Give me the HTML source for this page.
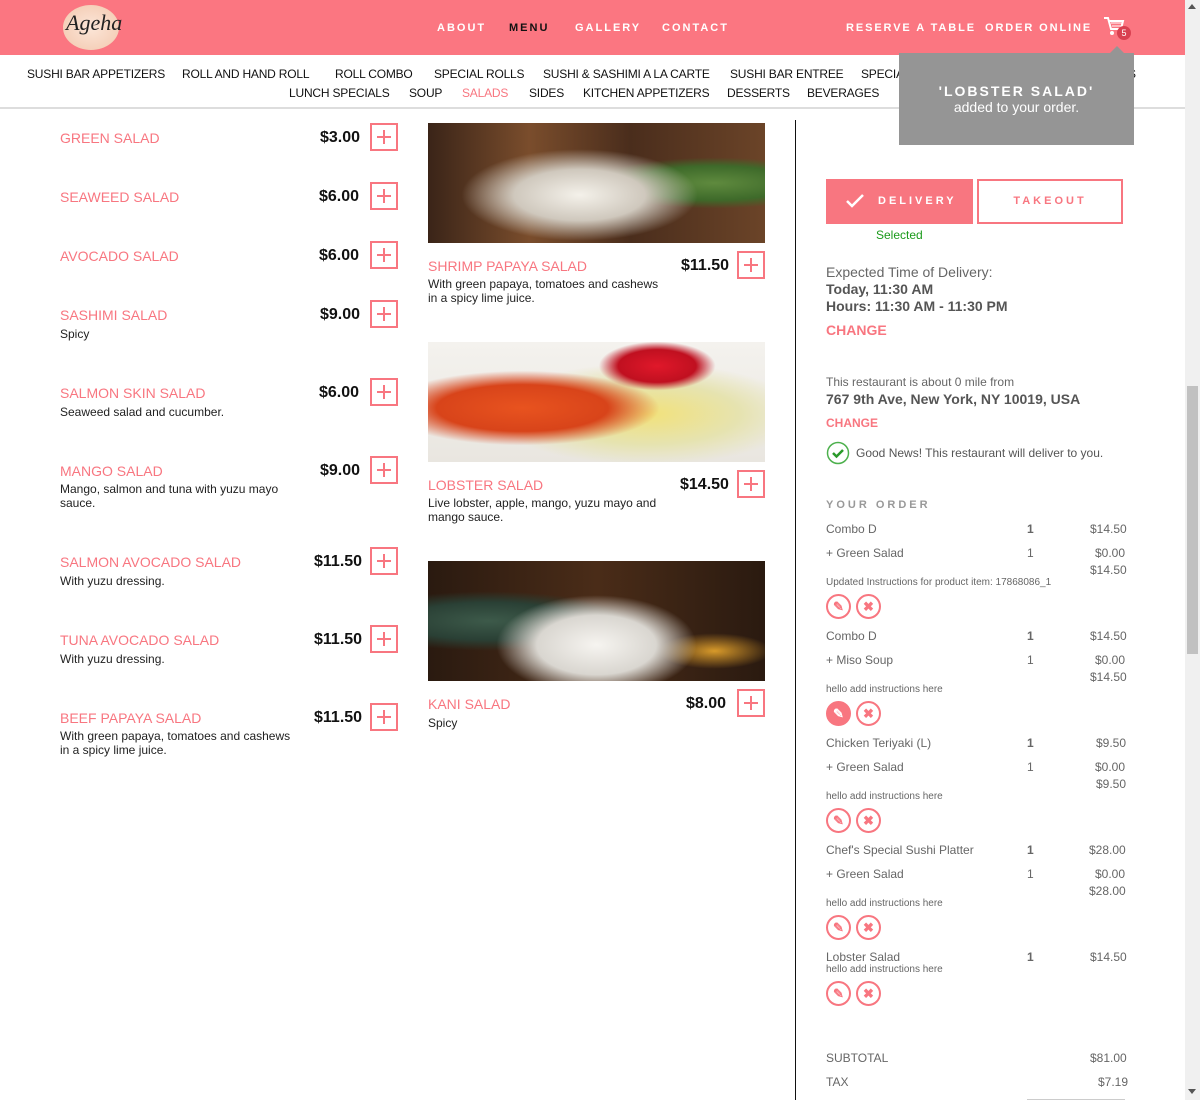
<!DOCTYPE html>
<html><head><meta charset="utf-8"><style>
*{margin:0;padding:0;box-sizing:border-box}
body{width:1200px;height:1100px;overflow:hidden;position:relative;background:#fff;font-family:"Liberation Sans",sans-serif;color:#333}
.a{position:absolute;white-space:nowrap}
.hdr{left:0;top:0;width:1185px;height:55px;background:#fb7681}
.nav{color:#fff;font-size:11px;letter-spacing:2px;font-weight:bold;top:22px}
.sub{left:0;top:55px;width:1185px;height:54px;background:#fff;border-bottom:2px solid #ddd}
.cat{font-size:12px;color:#111;letter-spacing:-0.2px}
.nm{color:#f87680;font-size:14px}
.pr{font-size:16px;font-weight:bold;color:#111}
.ds{font-size:12px;color:#222;line-height:14px}
.plus{width:28px;height:28px;border:2px solid #f87680}
.plus:before{content:"";position:absolute;left:5px;top:11px;width:14px;height:2px;background:#f87680}
.plus:after{content:"";position:absolute;left:11px;top:5px;width:2px;height:14px;background:#f87680}
.g{color:#666;font-size:12px}
.ic{width:25px;height:25px;border:2px solid #f87680;border-radius:50%;color:#f87680;font-size:13px;text-align:center;line-height:21px;font-weight:bold}
</style></head><body>
<div class="a hdr"></div>
<div class="a" style="left:63px;top:5px;width:56px;height:45px;border-radius:50%;background:radial-gradient(#fce6d8,#f2c7ad);"></div>
<div class="a" style="left:66px;top:10px;font-family:'Liberation Serif',serif;font-style:italic;font-size:22px;color:#222">Ageha</div>
<div class="a nav" style="left:437px">ABOUT</div>
<div class="a nav" style="left:509px;color:#111">MENU</div>
<div class="a nav" style="left:575px">GALLERY</div>
<div class="a nav" style="left:662px">CONTACT</div>
<div class="a nav" style="left:846px;letter-spacing:1.9px">RESERVE A TABLE</div>
<div class="a nav" style="left:985px;letter-spacing:1.9px">ORDER ONLINE</div>
<svg class="a" style="left:1103px;top:15px" width="22" height="22" viewBox="0 0 22 22"><path d="M1 3h4l3 11h10l2-8H6" fill="none" stroke="#fff" stroke-width="2"/><path d="M8 8h11M9 11h9" stroke="#fff"/><circle cx="9" cy="18" r="2" fill="#fff"/><circle cx="17" cy="18" r="2" fill="#fff"/></svg>
<div class="a" style="left:1117px;top:26px;width:14px;height:14px;border-radius:50%;background:#d94050;color:#fff;font-size:9px;text-align:center;line-height:14px">5</div>
<div class="a sub"></div>
<div class="a cat" style="left:27px;top:67px">SUSHI BAR APPETIZERS</div>
<div class="a cat" style="left:182px;top:67px">ROLL AND HAND ROLL</div>
<div class="a cat" style="left:335px;top:67px">ROLL COMBO</div>
<div class="a cat" style="left:434px;top:67px">SPECIAL ROLLS</div>
<div class="a cat" style="left:543px;top:67px">SUSHI &amp; SASHIMI A LA CARTE</div>
<div class="a cat" style="left:730px;top:67px">SUSHI BAR ENTREE</div>
<div class="a cat" style="left:861px;top:67px">SPECIALS</div>
<div class="a cat" style="left:1128px;top:67px">S</div>
<div class="a cat" style="left:289px;top:86px">LUNCH SPECIALS</div>
<div class="a cat" style="left:409px;top:86px">SOUP</div>
<div class="a cat" style="left:462px;top:86px;color:#f87680">SALADS</div>
<div class="a cat" style="left:529px;top:86px">SIDES</div>
<div class="a cat" style="left:583px;top:86px">KITCHEN APPETIZERS</div>
<div class="a cat" style="left:727px;top:86px">DESSERTS</div>
<div class="a cat" style="left:807px;top:86px">BEVERAGES</div>
<div class="a" style="left:899px;top:53px;width:235px;height:92px;background:#959595;color:#fff;text-align:center">
<div style="margin-top:30px;font-weight:bold;font-size:14px;letter-spacing:2px">'LOBSTER SALAD'</div><div style="font-size:14px">added to your order.</div></div>
<div class="a" style="left:1110px;top:46px;width:0;height:0;border:7px solid transparent;border-bottom-color:#959595;border-top:0"></div>

<div class="a nm" style="left:60px;top:130px">GREEN SALAD</div><div class="a pr" style="left:320px;top:129px">$3.00</div><div class="a plus" style="left:370px;top:123px"></div>
<div class="a nm" style="left:60px;top:189px">SEAWEED SALAD</div><div class="a pr" style="left:319px;top:188px">$6.00</div><div class="a plus" style="left:370px;top:182px"></div>
<div class="a nm" style="left:60px;top:248px">AVOCADO SALAD</div><div class="a pr" style="left:319px;top:247px">$6.00</div><div class="a plus" style="left:370px;top:241px"></div>
<div class="a nm" style="left:60px;top:307px">SASHIMI SALAD</div><div class="a pr" style="left:320px;top:306px">$9.00</div><div class="a plus" style="left:370px;top:300px"></div><div class="a ds" style="left:60px;top:327px">Spicy</div>
<div class="a nm" style="left:60px;top:385px">SALMON SKIN SALAD</div><div class="a pr" style="left:319px;top:384px">$6.00</div><div class="a plus" style="left:370px;top:378px"></div><div class="a ds" style="left:60px;top:405px">Seaweed salad and cucumber.</div>
<div class="a nm" style="left:60px;top:463px">MANGO SALAD</div><div class="a pr" style="left:320px;top:462px">$9.00</div><div class="a plus" style="left:370px;top:456px"></div><div class="a ds" style="left:60px;top:482px">Mango, salmon and tuna with yuzu mayo<br>sauce.</div>
<div class="a nm" style="left:60px;top:554px">SALMON AVOCADO SALAD</div><div class="a pr" style="left:314px;top:553px">$11.50</div><div class="a plus" style="left:370px;top:547px"></div><div class="a ds" style="left:60px;top:574px">With yuzu dressing.</div>
<div class="a nm" style="left:60px;top:632px">TUNA AVOCADO SALAD</div><div class="a pr" style="left:314px;top:631px">$11.50</div><div class="a plus" style="left:370px;top:625px"></div><div class="a ds" style="left:60px;top:652px">With yuzu dressing.</div>
<div class="a nm" style="left:60px;top:710px">BEEF PAPAYA SALAD</div><div class="a pr" style="left:314px;top:709px">$11.50</div><div class="a plus" style="left:370px;top:703px"></div><div class="a ds" style="left:60px;top:729px">With green papaya, tomatoes and cashews<br>in a spicy lime juice.</div>

<div class="a" style="left:428px;top:123px;width:337px;height:120px;background:radial-gradient(ellipse at 45% 60%,#f4f1ea 0,#cfc8bd 25%,transparent 45%),radial-gradient(ellipse at 85% 50%,#5f8a3e 0,#3e6a2a 20%,transparent 30%),linear-gradient(90deg,#3a2418,#7a4d2c 30%,#4a2d1c 60%,#6b4428)"></div>
<div class="a nm" style="left:428px;top:258px">SHRIMP PAPAYA SALAD</div><div class="a pr" style="left:681px;top:257px">$11.50</div><div class="a plus" style="left:737px;top:251px"></div><div class="a ds" style="left:428px;top:277px">With green papaya, tomatoes and cashews<br>in a spicy lime juice.</div>
<div class="a" style="left:428px;top:342px;width:337px;height:120px;background:radial-gradient(ellipse at 28% 55%,#e8531f 0,#d8441a 25%,transparent 40%),radial-gradient(ellipse at 68% 20%,#e0182a 0,#c01020 12%,transparent 18%),radial-gradient(ellipse at 65% 60%,#f2e27a 0,#e6e3b0 30%,transparent 50%),linear-gradient(#f4f2ee,#e9e6e0)"></div>
<div class="a nm" style="left:428px;top:477px">LOBSTER SALAD</div><div class="a pr" style="left:680px;top:476px">$14.50</div><div class="a plus" style="left:737px;top:470px"></div><div class="a ds" style="left:428px;top:496px">Live lobster, apple, mango, yuzu mayo and<br>mango sauce.</div>
<div class="a" style="left:428px;top:561px;width:337px;height:120px;background:radial-gradient(ellipse at 50% 70%,#f6f4f0 0,#d9d6d0 25%,transparent 42%),radial-gradient(ellipse at 85% 75%,#d89a2a 0,transparent 14%),radial-gradient(ellipse at 18% 50%,#3d5a4a 0,#2a4035 22%,transparent 35%),linear-gradient(90deg,#2a1a10,#4a2c18 50%,#2a1a10)"></div>
<div class="a nm" style="left:428px;top:696px">KANI SALAD</div><div class="a pr" style="left:686px;top:695px">$8.00</div><div class="a plus" style="left:737px;top:689px"></div><div class="a ds" style="left:428px;top:716px">Spicy</div>

<div class="a" style="left:795px;top:120px;width:1px;height:980px;background:#111"></div>

<div class="a" style="left:826px;top:179px;width:147px;height:45px;background:#f87680;color:#fff;font-weight:bold;font-size:11px;letter-spacing:3px;line-height:45px;padding-left:52px">DELIVERY</div>
<svg class="a" style="left:845px;top:193px" width="20" height="16"><path d="M2 8l5 5L18 2" stroke="#fff" stroke-width="2.5" fill="none"/></svg>
<div class="a" style="left:977px;top:179px;width:146px;height:45px;border:2px solid #f87680;color:#f87680;font-weight:bold;font-size:11px;letter-spacing:3px;line-height:41px;text-align:center">TAKEOUT</div>
<div class="a" style="left:876px;top:228px;font-size:12px;color:#1a9a1a">Selected</div>
<div class="a" style="left:826px;top:264px;font-size:14px;color:#666">Expected Time of Delivery:</div>
<div class="a" style="left:826px;top:281px;font-size:14px;color:#555;font-weight:bold;line-height:17px">Today, 11:30 AM<br>Hours: 11:30 AM - 11:30 PM</div>
<div class="a" style="left:826px;top:322px;font-size:14px;color:#f87680;font-weight:bold">CHANGE</div>
<div class="a g" style="left:826px;top:375px">This restaurant is about 0 mile from</div>
<div class="a" style="left:826px;top:391px;font-size:14px;color:#555;font-weight:bold">767 9th Ave, New York, NY 10019, USA</div>
<div class="a" style="left:826px;top:416px;font-size:12px;color:#f87680;font-weight:bold">CHANGE</div>
<svg class="a" style="left:826px;top:441px" width="24" height="24"><circle cx="12" cy="12" r="10.5" fill="none" stroke="#4cb04c" stroke-width="1.5"/><path d="M7 12l3.5 3.5L17 9" stroke="#2a9a2a" stroke-width="2.5" fill="none"/></svg>
<div class="a" style="left:856px;top:446px;font-size:12px;color:#555">Good News! This restaurant will deliver to you.</div>
<div class="a" style="left:826px;top:499px;font-size:11px;color:#999;font-weight:bold;letter-spacing:3px">YOUR ORDER</div>

<div class="a g" style="left:826px;top:522px">Combo D</div><div class="a g" style="left:1027px;top:522px;font-weight:bold">1</div><div class="a g" style="left:1090px;top:522px">$14.50</div>
<div class="a g" style="left:826px;top:546px">+ Green Salad</div><div class="a g" style="left:1027px;top:546px">1</div><div class="a g" style="left:1095px;top:546px">$0.00</div><div class="a g" style="left:1090px;top:563px">$14.50</div>
<div class="a g" style="left:826px;top:577px;font-size:10px">Updated Instructions for product item: 17868086_1</div>
<div class="a ic" style="left:826px;top:594px">✎</div><div class="a ic" style="left:856px;top:594px">✖</div>

<div class="a g" style="left:826px;top:629px">Combo D</div><div class="a g" style="left:1027px;top:629px;font-weight:bold">1</div><div class="a g" style="left:1090px;top:629px">$14.50</div>
<div class="a g" style="left:826px;top:653px">+ Miso Soup</div><div class="a g" style="left:1027px;top:653px">1</div><div class="a g" style="left:1095px;top:653px">$0.00</div><div class="a g" style="left:1090px;top:670px">$14.50</div>
<div class="a g" style="left:826px;top:684px;font-size:10px">hello add instructions here</div>
<div class="a ic" style="left:826px;top:701px;background:#f87680;color:#fff">✎</div><div class="a ic" style="left:856px;top:701px">✖</div>

<div class="a g" style="left:826px;top:736px">Chicken Teriyaki (L)</div><div class="a g" style="left:1027px;top:736px;font-weight:bold">1</div><div class="a g" style="left:1096px;top:736px">$9.50</div>
<div class="a g" style="left:826px;top:760px">+ Green Salad</div><div class="a g" style="left:1027px;top:760px">1</div><div class="a g" style="left:1095px;top:760px">$0.00</div><div class="a g" style="left:1096px;top:777px">$9.50</div>
<div class="a g" style="left:826px;top:791px;font-size:10px">hello add instructions here</div>
<div class="a ic" style="left:826px;top:808px">✎</div><div class="a ic" style="left:856px;top:808px">✖</div>

<div class="a g" style="left:826px;top:843px">Chef's Special Sushi Platter</div><div class="a g" style="left:1027px;top:843px;font-weight:bold">1</div><div class="a g" style="left:1089px;top:843px">$28.00</div>
<div class="a g" style="left:826px;top:867px">+ Green Salad</div><div class="a g" style="left:1027px;top:867px">1</div><div class="a g" style="left:1095px;top:867px">$0.00</div><div class="a g" style="left:1089px;top:884px">$28.00</div>
<div class="a g" style="left:826px;top:898px;font-size:10px">hello add instructions here</div>
<div class="a ic" style="left:826px;top:915px">✎</div><div class="a ic" style="left:856px;top:915px">✖</div>

<div class="a g" style="left:826px;top:950px">Lobster Salad</div><div class="a g" style="left:1027px;top:950px;font-weight:bold">1</div><div class="a g" style="left:1090px;top:950px">$14.50</div>
<div class="a g" style="left:826px;top:964px;font-size:10px">hello add instructions here</div>
<div class="a ic" style="left:826px;top:981px">✎</div><div class="a ic" style="left:856px;top:981px">✖</div>

<div class="a g" style="left:826px;top:1051px">SUBTOTAL</div><div class="a g" style="left:1090px;top:1051px">$81.00</div>
<div class="a g" style="left:826px;top:1075px">TAX</div><div class="a g" style="left:1098px;top:1075px">$7.19</div>
<div class="a" style="left:1027px;top:1099px;width:98px;height:1px;background:#ccc"></div>

<div class="a" style="left:1185px;top:0;width:15px;height:1100px;background:#f0f0f0"></div>
<div class="a" style="left:1187px;top:386px;width:11px;height:268px;background:#c1c1c1"></div>
<div class="a" style="left:1188px;top:4px;border:4px solid transparent;border-bottom:5px solid #555;border-top:0"></div>
<div class="a" style="left:1188px;top:1089px;border:4px solid transparent;border-top:5px solid #555;border-bottom:0"></div>
</body></html>
